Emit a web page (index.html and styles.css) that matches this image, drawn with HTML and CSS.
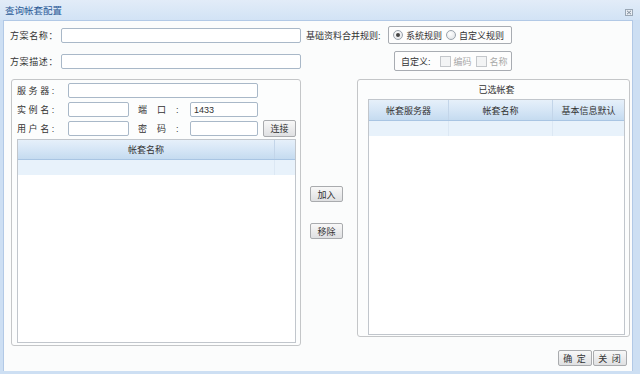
FILE: index.html
```html
<!DOCTYPE html>
<html lang="zh-CN">
<head>
    <meta charset="UTF-8">
    <title>查询帐套配置</title>
    <link rel="stylesheet" href="styles.css">
</head>
<body>
    <div class="window">
        <div class="window-header">
            <span class="window-title">查询帐套配置</span>
            <svg class="window-close" width="8" height="7" viewBox="0 0 8 7">
                <rect x="0.5" y="0.5" width="7" height="6" fill="#e9eef4" stroke="#9aa7b5"/>
                <path d="M2 1.8 L6 5.2 M6 1.8 L2 5.2" stroke="#7d8a98" stroke-width="1"/>
            </svg>
        </div>

        <div class="window-body">
            <!-- scheme name + merge rule -->
            <div class="form-row row-first">
                <label class="form-label">方案名称：</label>
                <input type="text" class="input input-wide">
                <span class="rule-label">基础资料合并规则:</span>
                <div class="option-box rule-box">
                    <span class="radio checked"></span><span class="option-text">系统规则</span>
                    <span class="radio"></span><span class="option-text">自定义规则</span>
                </div>
            </div>

            <!-- scheme description + custom options -->
            <div class="form-row row-second">
                <label class="form-label">方案描述：</label>
                <input type="text" class="input input-wide">
                <div class="option-box custom-box">
                    <span class="custom-label">自定义:</span>
                    <span class="checkbox"></span><span class="option-text disabled">编码</span>
                    <span class="checkbox"></span><span class="option-text disabled">名称</span>
                </div>
            </div>

            <div class="main-area">
                <!-- source server -->
                <div class="panel panel-left">
                    <div class="server-row">
                        <label class="server-label">服务器:</label>
                        <input type="text" class="input input-server">
                    </div>
                    <div class="server-row">
                        <label class="server-label">实例名:</label>
                        <input type="text" class="input input-short">
                        <label class="port-label">端口:</label>
                        <input type="text" class="input input-port" value="1433">
                    </div>
                    <div class="server-row">
                        <label class="server-label">用户名:</label>
                        <input type="text" class="input input-short">
                        <label class="port-label">密码:</label>
                        <input type="password" class="input input-port">
                        <button class="btn btn-connect">连接</button>
                    </div>

                    <div class="grid grid-source">
                        <div class="grid-header">
                            <div class="grid-cell col-name">帐套名称</div>
                            <div class="grid-cell col-scroll"></div>
                        </div>
                        <div class="grid-row">
                            <div class="grid-cell col-name"></div>
                            <div class="grid-cell col-scroll"></div>
                        </div>
                    </div>
                </div>

                <div class="move-buttons">
                    <button class="btn btn-move">加入</button>
                    <button class="btn btn-move">移除</button>
                </div>

                <div class="right-column">
                    <div class="panel panel-right">
                        <div class="panel-title">已选帐套</div>
                        <div class="grid grid-selected">
                            <div class="grid-header">
                                <div class="grid-cell col-server">帐套服务器</div>
                                <div class="grid-cell col-account">帐套名称</div>
                                <div class="grid-cell col-default">基本信息默认</div>
                            </div>
                            <div class="grid-row">
                                <div class="grid-cell col-server"></div>
                                <div class="grid-cell col-account"></div>
                                <div class="grid-cell col-default"></div>
                            </div>
                        </div>
                    </div>
                    <div class="footer-buttons">
                        <button class="btn btn-footer">确 定</button>
                        <button class="btn btn-footer">关 闭</button>
                    </div>
                </div>
            </div>
        </div>
    </div>
</body>
</html>
```

FILE: styles.css
```css
* {
    box-sizing: border-box;
}
body {
    margin: 0;
    font-family: "Liberation Sans", "Noto Sans CJK SC", sans-serif;
    font-size: 9px;
    color: #333;
}
.window {
    width: 640px;
    height: 374px;
    background: #cddff3;
    padding: 0 7px 3px 3px;
}
.window-header {
    height: 20px;
    display: flex;
    align-items: center;
    justify-content: space-between;
    background: linear-gradient(#e2ecf8, #d2e3f5);
    margin-left: -3px;
    margin-right: -7px;
    padding-right: 7px;
    padding-left: 5px;
}
.window-title {
    color: #2b5a96;
    font-size: 9.5px;
}
.window-close {
    display: block;
    margin-top: 4px;
}
.window-body {
    height: 351px;
    background: #fbfcfc;
    border: 1px solid #b2c9e6;
    border-bottom: none;
    padding: 5px 0 0 6px;
}
.form-row {
    width: 502px;
    display: flex;
    align-items: center;
}
.row-first {
    height: 18px;
}
.row-second {
    height: 20px;
    margin-top: 7px;
}
.form-label {
    width: 51px;
    letter-spacing: 0.6px;
}
.input {
    height: 15px;
    border: 1px solid #a9b8c8;
    border-radius: 2px;
    background: #fff;
    font: inherit;
    padding: 0 3px;
    color: #333;
}
.input-wide {
    width: 240px;
}
.rule-label {
    margin-left: 5px;
    width: 82px;
    white-space: nowrap;
}
.option-box {
    display: flex;
    align-items: center;
    border: 1px solid #a8acb2;
    border-radius: 2px;
    background: #fdfdfd;
    white-space: nowrap;
}
.option-box > * {
    flex-shrink: 0;
}
.rule-box {
    width: 124px;
    height: 18px;
    padding-left: 4px;
}
.custom-box {
    margin-left: auto;
    width: 118px;
    height: 20px;
    padding-left: 6px;
}
.radio {
    width: 10px;
    height: 10px;
    border-radius: 50%;
    border: 1px solid #9aa3ad;
    background: radial-gradient(circle at 40% 35%, #fff, #dcdfe3);
    display: flex;
    align-items: center;
    justify-content: center;
}
.radio.checked::after {
    content: "";
    width: 4px;
    height: 4px;
    border-radius: 50%;
    background: #444;
}
.option-text {
    margin: 0 4px 0 3px;
}
.option-text.disabled {
    color: #a8a8a8;
}
.custom-label {
    margin-right: 9px;
}
.checkbox {
    width: 11px;
    height: 11px;
    border: 1px solid #c4c7cb;
    background: #f3f4f5;
}
.main-area {
    display: flex;
    align-items: flex-start;
    margin-top: 8px;
}
.panel {
    border: 1px solid #c4c6c8;
    border-radius: 3px;
    background: #fcfdfd;
}
.panel-left {
    margin-left: 1px;
    width: 290px;
    height: 267px;
    padding: 3px 4px 0 5px;
}
.server-row {
    display: flex;
    align-items: center;
    height: 15px;
    margin-bottom: 4px;
}
.server-label {
    width: 51px;
    letter-spacing: 2.6px;
}
.port-label {
    width: 61px;
    padding-left: 9px;
    letter-spacing: 10px;
}
.input-server {
    width: 190px;
}
.input-short {
    width: 61px;
}
.input-port {
    width: 68px;
}
.btn {
    font: inherit;
    color: #333;
    border: 1px solid #a9abae;
    border-radius: 2px;
    background: linear-gradient(#f8f8f8, #dfe0e2);
    padding: 0;
    height: 16px;
    width: 33px;
}
.btn-connect {
    margin-left: 5px;
    height: 17px;
}
.grid {
    border: 1px solid #c1c6cc;
    background: #fff;
}
.grid-source {
    width: 279px;
    height: 204px;
    margin-top: -1px;
}
.grid-header {
    display: flex;
    height: 20px;
    background: linear-gradient(#e6f0fa 0%, #d6e6f6 50%, #c5dbf0 100%);
    border-bottom: 1px solid #a9c5e3;
}
.grid-row {
    display: flex;
    height: 15px;
    background: #e8f2fb;
}
.grid-cell {
    display: flex;
    align-items: center;
    justify-content: center;
    border-right: 1px solid #c3d5e9;
}
.grid-row .grid-cell {
    border-right-color: #dce8f4;
}
.col-name {
    width: 257px;
}
.col-scroll {
    flex: 1;
    border-right: none;
}
.move-buttons {
    width: 56px;
    display: flex;
    flex-direction: column;
    gap: 21px;
    padding: 107px 0 0 9px;
}
.right-column {
    width: 273px;
}
.panel-right {
    height: 258px;
    padding: 0 4px 0 10px;
}
.panel-title {
    height: 19px;
    display: flex;
    align-items: center;
    justify-content: center;
}
.grid-selected {
    width: 257px;
    height: 236px;
}
.grid-selected .grid-header {
    height: 21px;
}
.col-server {
    width: 80px;
}
.col-account {
    width: 104px;
}
.col-default {
    flex: 1;
    border-right: none;
}
.footer-buttons {
    display: flex;
    justify-content: flex-end;
    gap: 1px;
    margin-top: 13px;
    padding-right: 3px;
}
.btn-footer {
    width: 34px;
    height: 16px;
    letter-spacing: 1px;
}
```
